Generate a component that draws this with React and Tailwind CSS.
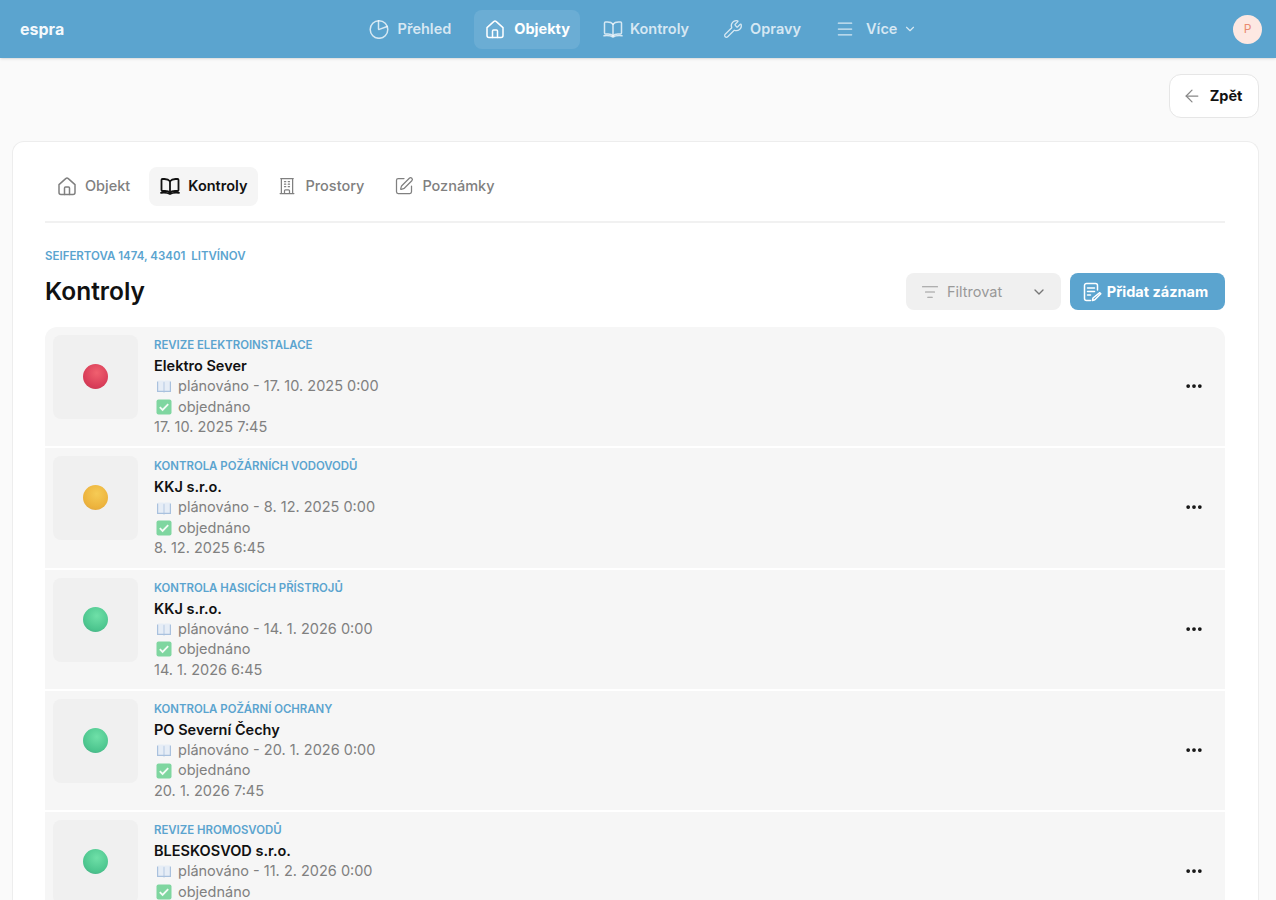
import React from 'react'
import { ArrowLeft, ChevronDown, Ellipsis, ListFilter, Menu, SquarePen, Wrench } from 'lucide-react'
import { HiOutlineBuildingOffice } from 'react-icons/hi2'

function PieIcon({ size = 20, strokeWidth = 1.5 }) {
  return (
    <svg width={size} height={size} viewBox="0 0 20 20" fill="none" stroke="currentColor" strokeWidth={strokeWidth} strokeLinecap="round" strokeLinejoin="round" className="shrink-0">
      <circle cx="10" cy="10.5" r="8.8" />
      <path d="M9.500 1.800V9.800a.6.6 0 0 0 .8.600l7.800-2.900" />
    </svg>
  )
}

function HomeIcon({ size = 20, strokeWidth = 1.5 }) {
  return (
    <svg width={size} height={size} viewBox="0 0 20 20" fill="none" stroke="currentColor" strokeWidth={strokeWidth} strokeLinecap="round" strokeLinejoin="round" className="shrink-0">
      <path d="M2 8.600 8.700 2.600a2 2 0 0 1 2.600 0L18 8.600v7.900a2 2 0 0 1-2 2H4a2 2 0 0 1-2-2z" />
      <path d="M7.500 18.500v-6.500a1 1 0 0 1 1-1h3a1 1 0 0 1 1 1v6.500" />
    </svg>
  )
}

function BookIcon({ size = 20, strokeWidth = 1.5 }) {
  return (
    <svg width={size} height={size} viewBox="0 0 20 20" fill="none" stroke="currentColor" strokeWidth={strokeWidth} strokeLinecap="round" strokeLinejoin="round" className="shrink-0">
      <path d="M10 5.200C8.800 3.700 7 3 4.500 3H2.500a1 1 0 0 0-1 1v10a1 1 0 0 0 1 1h2.500c2.300 0 4 .6 5 1.800 1-1.200 2.700-1.800 5-1.800h2.500a1 1 0 0 0 1-1V4a1 1 0 0 0-1-1h-2c-2.500 0-4.300.7-5.500 2.200z" />
      <path d="M10 5.200v11.600" />
      <path d="M1 16.800c3-.4 6.500-.2 9 1.200 2.500-1.400 6-1.600 9-1.200" />
    </svg>
  )
}

const topLinks = [
  { label: 'Přehled', icon: PieIcon, spacing: 'gap-[9px] px-[11px]' },
  { label: 'Objekty', icon: HomeIcon, active: true, spacing: 'gap-[9px] pl-[11px] pr-[10px]' },
  { label: 'Kontroly', icon: BookIcon, spacing: 'gap-[7px] px-[11px]' },
  { label: 'Opravy', icon: Wrench, spacing: 'gap-[7px] px-[11px]' },
]

const tabs = [
  { label: 'Objekt', icon: HomeIcon },
  { label: 'Kontroly', icon: BookIcon, active: true },
  { label: 'Prostory', icon: HiOutlineBuildingOffice },
  { label: 'Poznámky', icon: SquarePen },
]

const records = [
  { type: 'Revize elektroinstalace', name: 'Elektro Sever', planned: '17. 10. 2025 0:00', date: '17. 10. 2025 7:45', ball: 'bg-[radial-gradient(circle_at_55%_35%,#f0606f,#d83c58_65%,#b93c52)]' },
  { type: 'Kontrola požárních vodovodů', name: 'KKJ s.r.o.', planned: '8. 12. 2025 0:00', date: '8. 12. 2025 6:45', ball: 'bg-[radial-gradient(circle_at_55%_35%,#f6cb55,#ecb23c_65%,#d39c4c)]' },
  { type: 'Kontrola hasicích přístrojů', name: 'KKJ s.r.o.', planned: '14. 1. 2026 0:00', date: '14. 1. 2026 6:45', ball: 'bg-[radial-gradient(circle_at_55%_35%,#6fe0a8,#4cc58e_65%,#479d80)]' },
  { type: 'Kontrola požární ochrany', name: 'PO Severní Čechy', planned: '20. 1. 2026 0:00', date: '20. 1. 2026 7:45', ball: 'bg-[radial-gradient(circle_at_55%_35%,#6fe0a8,#4cc58e_65%,#479d80)]' },
  { type: 'Revize hromosvodů', name: 'BLESKOSVOD s.r.o.', planned: '11. 2. 2026 0:00', date: '11. 2. 2026 7:45', ball: 'bg-[radial-gradient(circle_at_55%_35%,#6fe0a8,#4cc58e_65%,#479d80)]' },
]

function BookEmoji() {
  return (
    <svg width="16" height="16" viewBox="0 0 16 16" className="shrink-0">
      <path d="M1 3.500h6.500l.5 1 .5-1H15v10.500H9l-1 .6-1-.6H1z" fill="#a9c1de" />
      <path d="M2.200 2.500H7.600V12.800H2.200zM8.400 2.500H13.800V12.800H8.400z" fill="#e6edf6" />
    </svg>
  )
}

function CheckEmoji() {
  return (
    <svg width="16" height="16" viewBox="0 0 16 16" className="shrink-0">
      <rect x="0.5" y="0.5" width="15" height="15" rx="2" fill="#7fd6a0" />
      <path d="M3.800 8.200l2.800 2.800 5.600-5.800" fill="none" stroke="#f3fbf6" strokeWidth="1.8" />
    </svg>
  )
}

function AddRecordIcon() {
  return (
    <svg width="20" height="20" viewBox="0 0 20 20" fill="none" stroke="currentColor" strokeWidth="1.5" strokeLinecap="round" strokeLinejoin="round" className="shrink-0">
      <path d="M15.500 8V3.500a2 2 0 0 0-2-2h-9a2 2 0 0 0-2 2v13a2 2 0 0 0 2 2h4" />
      <path d="M5.500 6h7M5.500 9.500h7M5.500 13h3" />
      <path d="M17.800 10.700l1 1-6 6-2.400.9.600-2.600z" />
    </svg>
  )
}

function Record({ item }) {
  return (
    <div className="flex h-[119.25px] shrink-0 items-center bg-[#f6f6f6] p-2 first:rounded-t-xl">
      <div className="flex h-[84px] w-[85px] shrink-0 self-start items-center justify-center rounded-lg bg-[#f0f0f0]">
        <span className={`mb-[1px] h-[25px] w-[25px] rounded-full ${item.ball}`}></span>
      </div>
      <div className="ml-4 flex flex-1 flex-col self-start">
        <div className="mt-[2px] text-[11.4px] leading-[17px] font-semibold uppercase text-[#5ba4cf]">{item.type}</div>
        <div className="mt-[2px] text-[14.5px] leading-[20px] font-semibold text-[#111111]">{item.name}</div>
        <div className="flex items-center gap-[6px] pl-[2px] text-[14.5px] leading-[20.5px] text-[#808080]">
          <BookEmoji />
          <span>plánováno - {item.planned}</span>
        </div>
        <div className="flex items-center gap-[6px] pl-[2px] text-[14.5px] leading-[20.5px] text-[#808080]">
          <CheckEmoji />
          <span>objednáno</span>
        </div>
        <div className="text-[14.5px] leading-[20.5px] text-[#808080]">{item.date}</div>
      </div>
      <button className="mr-[13px] mb-[1px] text-[#111111]">
        <Ellipsis size={20} strokeWidth={2.5} />
      </button>
    </div>
  )
}

export default function App() {
  return (
    <div className="flex h-[900px] flex-col overflow-hidden bg-[#fafafa] font-['Inter',sans-serif]">
      <header className="relative flex h-[58px] shrink-0 items-center justify-center bg-[#5ba4cf] shadow-sm">
        <div className="absolute left-5 text-base font-bold text-white/95">espra</div>
        <nav className="flex items-center gap-[12px] pl-[10px]">
          {topLinks.map(link => {
            const Icon = link.icon
            return (
              <a key={link.label} className={`flex h-[39px] items-center rounded-lg text-[14.5px] ${link.spacing} ${link.active ? 'bg-white/10 font-bold text-white' : 'font-semibold text-white/75'}`}>
                <Icon size={20} strokeWidth={1.5} />
                {link.label}
              </a>
            )
          })}
          <a className="flex h-[39px] items-center rounded-lg px-[11px] text-[14.5px] font-semibold text-white/75">
            <Menu size={20} strokeWidth={1.5} />
            <span className="ml-[11px]">Více</span>
            <ChevronDown size={14} className="ml-[6px]" />
          </a>
        </nav>
        <div className="absolute right-[14px] flex h-[29px] w-[29px] items-center justify-center rounded-full bg-[#fde8e2] text-xs text-[#e98a70]">P</div>
      </header>

      <main className="flex min-h-0 flex-1 flex-col px-3 pt-4">
        <div className="flex shrink-0 justify-end pr-[5px]">
          <button className="flex h-11 w-[90px] items-center justify-center gap-[8px] rounded-xl border border-[#e6e6e6] bg-white pr-[4px] text-[14.5px] font-bold text-[#111111]">
            <ArrowLeft size={20} strokeWidth={1.5} className="text-[#888888]" />
            Zpět
          </button>
        </div>

        <section className="mt-[23px] mr-[5px] flex min-h-0 flex-1 flex-col rounded-t-xl border border-b-0 border-[#ededed] bg-white pl-[32px] pr-[33px] pt-[25px]">
          <div className="flex shrink-0 items-center gap-[8px] border-b-2 border-[#f1f1f1] pb-[15px] pl-[1px]">
            {tabs.map(tab => {
              const Icon = tab.icon
              return (
                <a key={tab.label} className={`flex h-[39px] items-center gap-2 rounded-lg px-[11px] pb-[1px] text-[14.5px] ${tab.active ? 'bg-[#f5f5f5] font-semibold text-[#111111]' : 'text-[#808080] font-medium'}`}>
                  <Icon size={20} strokeWidth={tab.active ? 1.8 : 1.5} />
                  {tab.label}
                </a>
              )
            })}
          </div>

          <div className="mt-[26px] shrink-0 text-[11.5px] leading-[14px] font-semibold uppercase text-[#5ba4cf]">Seifertova 1474, 43401&nbsp; Litvínov</div>

          <div className="mt-[10px] flex shrink-0 items-center justify-between">
            <h1 className="mb-[2px] text-[24.5px] leading-[32px] font-semibold text-[#111111]">Kontroly</h1>
            <div className="flex gap-[9px]">
              <button className="flex h-[37px] w-[155px] items-center rounded-lg bg-[#f0f0f0] pl-[15px] pr-[14px] text-[14.5px] text-[#999999]">
                <ListFilter size={18} strokeWidth={1.5} />
                <span className="ml-2 flex-1 text-left">Filtrovat</span>
                <ChevronDown size={16} className="text-[#777777]" />
              </button>
              <button className="flex h-[37px] w-[155px] items-center justify-center gap-[5px] rounded-lg bg-[#5ba4cf] pr-[5px] text-[14.5px] font-bold text-white">
                <AddRecordIcon />
                Přidat záznam
              </button>
            </div>
          </div>

          <div className="mt-[17px] flex min-h-0 flex-1 flex-col gap-[2px] overflow-hidden">
            {records.map(item => (
              <Record key={item.type} item={item} />
            ))}
          </div>
        </section>
      </main>
    </div>
  )
}
